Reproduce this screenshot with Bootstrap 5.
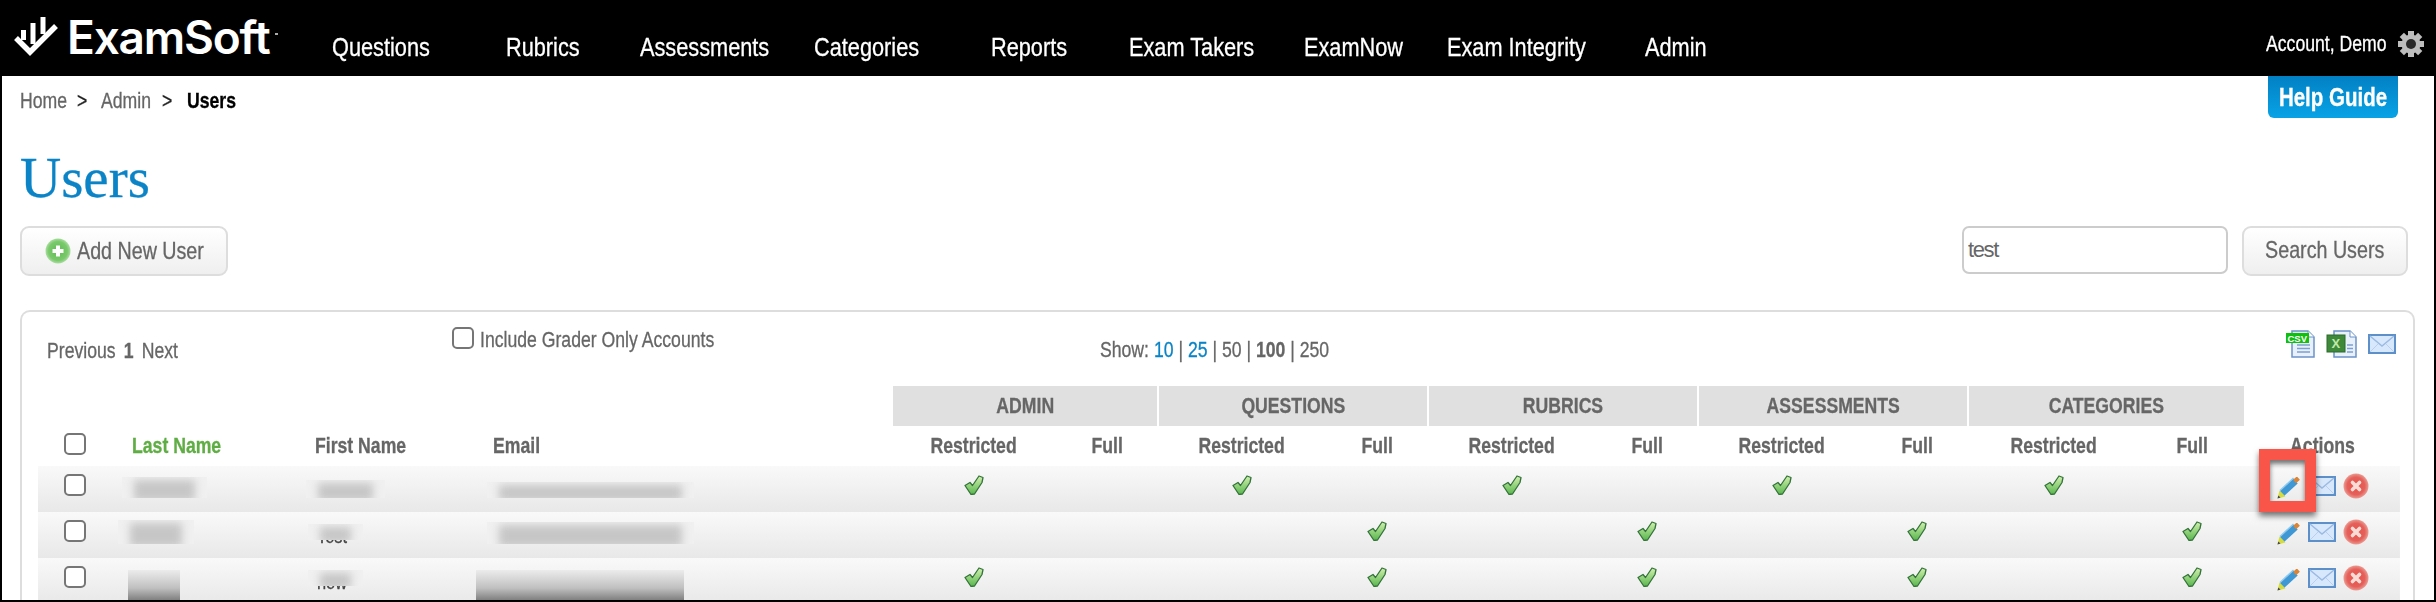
<!DOCTYPE html>
<html lang="en">
<head>
<meta charset="utf-8">
<title>Users</title>
<link href="https://cdn.jsdelivr.net/npm/bootstrap@5.3.0/dist/css/bootstrap.min.css" rel="stylesheet">
<style>
html,body{height:602px;overflow:hidden;background:#fff}
body{font-family:"Liberation Sans",Arial,sans-serif;color:#666;font-size:21.5px}
.frame{height:602px;overflow:hidden;border:solid #000;border-width:0 2px 2px;background:#fff}
.slim,.slimc{display:inline-block;white-space:nowrap;transform:scaleX(.82);-webkit-text-stroke:.3px currentColor}
.slim{transform-origin:left center}
.slimc{transform-origin:center center}
.topbar{height:76px;background:#000;color:#fff}
.logo{width:330px;padding:16px 0 0 12px}
.logo-word{font-family:Inter,"Liberation Sans",sans-serif;font-weight:600;font-size:46px;line-height:42px;letter-spacing:-1.2px;color:#fff;margin-left:7px;margin-top:0}
.logo-tm{width:3px;height:2px;background:#aaa;margin:17px 0 0 5px}
.menu{display:grid;grid-template-columns:174px 134px 174px 177px 138px 175px 143px 198px 100px;padding:29px 0 0;list-style:none;margin:0}
.menu a{color:#fff;text-decoration:none;font-size:26.5px;line-height:36px}
.account{padding:27px 8px 0 0;line-height:34px}
.acct-name{width:120px;margin-right:10px}
.gear{margin-top:3px}
.crumbrow{height:42px;padding-left:18px;padding-right:36px}
.crumbs{display:grid;grid-template-columns:57px 24px 61px 25px auto;line-height:26px;padding:12px 0 0;list-style:none;margin:0}
.crumbs a{color:#666;text-decoration:none}
.crumbs .sep{color:#222}
.crumbs b{color:#000}
.helpbtn{width:130px;height:42px;padding:0;border:0;border-radius:0 0 6px 6px;background:linear-gradient(#0280c4,#08a3e6);color:#fff;font-weight:700;font-size:25px;line-height:42px}
.pagetitle{font-family:"Liberation Serif",serif;color:#0a84c6;font-size:57px;line-height:64px;font-weight:400;margin:0;padding:28px 0 16px 18px;-webkit-text-stroke:.3px currentColor}
.toolrow{padding:0 26px 0 18px;height:50px}
.softbtn{height:50px;border:2px solid #ddd;border-radius:9px;background:linear-gradient(#fff,#efefef);color:#666;font-size:24px;line-height:44px;padding:0}
.addbtn{width:208px;padding-left:23px;gap:6px}
.searchbtn{width:166px;margin-left:14px}
.searchbox{width:266px;height:48px;border:2px solid #ccc;border-radius:7px;color:#666;font-size:22px;letter-spacing:-1.4px;padding:0 4px;font-family:inherit}
.panel{margin:34px 19px 0 18px;height:320px;border:2px solid #ddd;border-bottom:0;border-radius:10px 10px 0 0;padding:0 0 0 16px}
.paneltop{height:74px;display:grid;grid-template-columns:405px 648px 1fr auto;margin-left:9px;color:#666}
.pager{padding-top:26px;line-height:26px}
.pager b{margin:0 4px}
.graders{padding-top:14px;line-height:28px;display:flex}
.showbar{padding-top:25px;line-height:26px}
.showbar a{color:#0a84c6;text-decoration:none}
.exports{padding:18px 17px 0 0;gap:10px}
.tick{appearance:none;-webkit-appearance:none;display:block;width:22px;height:22px;border:2px solid #767676;border-radius:5px;background:#fff;margin:0}
.graders .tick{margin:1px 6px 0 0}
.usertable{width:2362px;table-layout:fixed;border-collapse:collapse;margin:0;--bs-table-bg:transparent;--bs-table-color:#666;color:#666}
.usertable th,.usertable td{padding:0;border:0;vertical-align:top;box-shadow:none}
.usertable th{font-size:21.5px;font-weight:700;text-align:center;line-height:40px;height:40px}
.usertable .grp{background:#e0e0e0;border-left:2px solid #fff;line-height:39px;padding-top:1px}
.usertable .lefth{text-align:left;padding-left:12px}
.sortname{color:#5fad44}
.usertable tbody tr{height:46px;background:linear-gradient(#f9f9f9,#e8e8e8)}
.usertable tbody td{height:46px;text-align:center;position:relative}
.usertable tbody td.namecell{text-align:left;padding:12px 0 0 14px;font-size:20px;line-height:24px;color:#444}
.rowtick{margin:8px 0 0 26px}
.headtick{margin:7px 0 0 26px}
.mark-ok{display:block;margin:9px auto 0}
.redact{display:block;background:#f0f0f0;overflow:hidden}
.smear{display:block;height:100%;background:#c6c6c6;filter:blur(4px);margin:3px 12px}
.r1a{width:85px;height:21px;margin:11px 0 0 2px}
.r1b{width:79px;height:18px;margin:14px 0 0 3px}
.r1c{width:207px;height:16px;margin:16px 0 0 6px}
.r2a{width:76px;height:24px;margin:8px 0 0 -2px}
.r2b{position:absolute;left:5px;top:12px;width:55px;height:16px}
.r2c{width:207px;height:22px;margin:10px 0 0 6px}
.r3a{width:52px;height:30px;margin:12px 0 0 8px;background:linear-gradient(#ececec,#c0c0c0 60%,#808080)}
.r3c{width:208px;height:30px;margin:12px 0 0 -5px;background:linear-gradient(#ececec,#c0c0c0 60%,#808080)}
.r3a .smear,.r3c .smear{background:transparent}
.acts{display:flex;align-items:flex-start;padding:7px 0 0 33px}
.acts .ic-mail{margin:3px 0 0 8px}
.acts .ic-del{margin:0 0 0 7px}
.callout{position:absolute;left:15px;top:-17px;width:57px;height:63px;border:11px solid #fa5549;box-shadow:0 4px 6px rgba(0,0,0,.55),inset 0 4px 5px rgba(0,0,0,.55);pointer-events:none}
.csvtag{font:700 9.5px/11px "Liberation Sans",sans-serif;fill:#fff}
.xlstag{font:700 13px/13px "Liberation Sans",sans-serif;fill:#bfe8a8}
</style>
</head>
<body>
<svg width="0" height="0" class="position-absolute">
<defs>
<linearGradient id="gOk" x1="0" y1="0" x2="0" y2="1"><stop offset="0" stop-color="#d2f0ae"/><stop offset="1" stop-color="#58b64c"/></linearGradient>
<radialGradient id="gDel"><stop offset="0" stop-color="#ea5148"/><stop offset=".7" stop-color="#e4605a"/><stop offset="1" stop-color="#eb9a90"/></radialGradient>
<radialGradient id="gAdd"><stop offset="0" stop-color="#5fbc52"/><stop offset=".75" stop-color="#79c96b"/><stop offset="1" stop-color="#a9dda0"/></radialGradient>
<symbol id="okmark" viewBox="0 0 20 20"><path d="M1 10.500 6 7.500 8.500 10.500 15 1 19 2.500 18 7.500 10.500 19 7 19.500Z" fill="url(#gOk)" stroke="#33733a" stroke-width="1.300" stroke-linejoin="round"/></symbol>
<symbol id="pencil" viewBox="0 0 23 22"><path d="M5 16.500 18.500 4" stroke="#3f97d4" stroke-width="6.500"/><path d="M3 13.500 16.500 1" stroke="#8ccaef" stroke-width="1.500"/><path d="M18.500 1.500 21.500 5" stroke="#d98436" stroke-width="5" transform="translate(-.5 -.5)"/><path d="M0.500 21.500 2.500 13.500 8.500 19.500Z" fill="#d6dc3a"/><path d="M.5 21.500 1.300 18.500 3.500 20.500Z" fill="#445"/></symbol>
<symbol id="mail" viewBox="0 0 28 20"><rect x="1" y="1" width="26" height="18" fill="#d8e8fc" stroke="#5d8fc9" stroke-width="2"/><path d="M2 2 14 12 26 2" fill="none" stroke="#9cbbe2" stroke-width="1.500"/><path d="M2 18 10 10M26 18 18 10" stroke="#b9d0ec" stroke-width="1"/></symbol>
<symbol id="del" viewBox="0 0 26 26"><circle cx="13" cy="13" r="12.500" fill="url(#gDel)"/><path d="M9.500 9.500 16.500 16.500M16.500 9.500 9.500 16.500" stroke="#fadcd7" stroke-width="3.600" stroke-linecap="round"/></symbol>
</defs>
</svg>
<div class="frame">
  <nav class="topbar d-flex">
    <div class="logo d-flex align-items-start">
      <svg width="46" height="40" viewBox="0 0 46 40" fill="none" class="flex-shrink-0"><g transform="translate(-14 -16)" stroke="#fff"><path d="M16 38 30 52 56 26" stroke-width="5.500"/><path d="M23.500 30V40" stroke-width="5"/><path d="M33 23V44" stroke-width="5"/><path d="M43 17V34" stroke-width="5"/></g></svg>
      <span class="logo-word">ExamSoft</span><span class="logo-tm"></span>
    </div>
    <ul class="menu flex-grow-1">
      <li><a href="#" class="slim">Questions</a></li><li><a href="#" class="slim">Rubrics</a></li><li><a href="#" class="slim">Assessments</a></li><li><a href="#" class="slim">Categories</a></li><li><a href="#" class="slim">Reports</a></li><li><a href="#" class="slim">Exam Takers</a></li><li><a href="#" class="slim">ExamNow</a></li><li><a href="#" class="slim">Exam Integrity</a></li><li><a href="#" class="slim">Admin</a></li>
    </ul>
    <div class="account d-flex align-items-start">
      <div class="acct-name"><span class="slim">Account, Demo</span></div>
      <svg class="gear" width="30" height="28" viewBox="0 0 30 28"><g fill="#bdbdbd"><circle cx="15" cy="14" r="9.500"/><g stroke="#bdbdbd" stroke-width="6"><path d="M15 1V27"/><path d="M2 14H28"/><path d="M5.800 4.800 24.200 23.200"/><path d="M24.200 4.800 5.800 23.200"/></g></g><circle cx="15" cy="14" r="5" fill="#2a2a2a"/></svg>
    </div>
  </nav>

  <div class="crumbrow d-flex justify-content-between align-items-start">
    <ol class="crumbs"><li><a href="#" class="slim">Home</a></li><li><span class="slim sep">&gt;</span></li><li><a href="#" class="slim">Admin</a></li><li><span class="slim sep">&gt;</span></li><li><b class="slim">Users</b></li></ol>
    <button type="button" class="btn helpbtn d-flex justify-content-center"><span class="slimc">Help Guide</span></button>
  </div>

  <h1 class="pagetitle">Users</h1>

  <div class="toolrow d-flex justify-content-between align-items-start">
    <button type="button" class="btn softbtn addbtn d-flex align-items-center">
      <svg width="26" height="26" viewBox="0 0 26 26" class="flex-shrink-0"><circle cx="13" cy="13" r="12.500" fill="url(#gAdd)"/><path d="M13 7.500V18.500M7.500 13H18.500" stroke="#fff" stroke-width="4"/></svg>
      <span class="slim">Add New User</span>
    </button>
    <form class="d-flex align-items-start">
      <input class="searchbox" type="text" value="test" aria-label="Search users">
      <button type="button" class="btn softbtn searchbtn d-flex justify-content-center"><span class="slimc">Search Users</span></button>
    </form>
  </div>

  <section class="panel">
    <div class="paneltop">
      <div class="pager"><span class="slim">Previous <b>1</b> Next</span></div>
      <label class="graders"><input type="checkbox" class="tick"><span class="slim">Include Grader Only Accounts</span></label>
      <div class="showbar"><span class="slim">Show: <a href="#">10</a> | <a href="#">25</a> | 50 | <b>100</b> | 250</span></div>
      <div class="exports d-flex align-items-start">
        <svg width="30" height="28" viewBox="0 0 30 28"><path d="M6 1H22L28 7V27H6Z" fill="#e8f0fb" stroke="#6b93c9" stroke-width="1.500"/><path d="M22 1V7H28" fill="#fff" stroke="#6b93c9"/><path d="M11 15H24M11 18.500H24M11 22H24" stroke="#7d9fd0" stroke-width="1.500"/><rect x="0" y="3" width="23" height="10" fill="#0fc00f"/><text x="1.500" y="11.500" class="csvtag">CSV</text></svg>
        <svg width="32" height="28" viewBox="0 0 32 28"><path d="M8 1H24L30 7V27H8Z" fill="#e8f0fb" stroke="#6b93c9" stroke-width="1.500"/><path d="M24 1V7H30" fill="#fff" stroke="#6b93c9"/><path d="M21 15H27M21 18.500H27M21 22H27" stroke="#7d9fd0" stroke-width="1.500"/><rect x="1" y="5" width="18" height="17" fill="#3f8a3a" stroke="#2a6a2a"/><text x="5.500" y="18" class="xlstag">X</text></svg>
        <svg width="28" height="20" class="mt-1"><use href="#mail"/></svg>
      </div>
    </div>
    <table class="table usertable">
      <colgroup><col style="width:82px"><col style="width:183px"><col style="width:178px"><col style="width:411px"><col style="width:164px"><col style="width:102px"><col style="width:168px"><col style="width:102px"><col style="width:168px"><col style="width:102px"><col style="width:168px"><col style="width:102px"><col style="width:172px"><col style="width:104px"><col></colgroup>
      <thead>
        <tr><th colspan="4"></th><th colspan="2" class="grp"><span class="slimc">ADMIN</span></th><th colspan="2" class="grp"><span class="slimc">QUESTIONS</span></th><th colspan="2" class="grp"><span class="slimc">RUBRICS</span></th><th colspan="2" class="grp"><span class="slimc">ASSESSMENTS</span></th><th colspan="2" class="grp"><span class="slimc">CATEGORIES</span></th><th></th></tr>
        <tr>
          <th><input type="checkbox" class="tick headtick" aria-label="Select all"></th>
          <th class="lefth"><span class="slim sortname">Last Name</span></th>
          <th class="lefth"><span class="slim">First Name</span></th>
          <th class="lefth"><span class="slim">Email</span></th>
          <th><span class="slimc">Restricted</span></th><th><span class="slimc">Full</span></th><th><span class="slimc">Restricted</span></th><th><span class="slimc">Full</span></th><th><span class="slimc">Restricted</span></th><th><span class="slimc">Full</span></th><th><span class="slimc">Restricted</span></th><th><span class="slimc">Full</span></th><th><span class="slimc">Restricted</span></th><th><span class="slimc">Full</span></th><th><span class="slimc">Actions</span></th>
        </tr>
      </thead>
      <tbody>
        <tr>
          <td><input type="checkbox" class="tick rowtick" aria-label="Select row"></td>
          <td><span class="redact r1a"><span class="smear"></span></span></td>
          <td><span class="redact r1b"><span class="smear"></span></span></td>
          <td><span class="redact r1c"><span class="smear"></span></span></td>
          <td><svg class="mark-ok" width="20" height="20"><use href="#okmark"/></svg></td><td></td>
          <td><svg class="mark-ok" width="20" height="20"><use href="#okmark"/></svg></td><td></td>
          <td><svg class="mark-ok" width="20" height="20"><use href="#okmark"/></svg></td><td></td>
          <td><svg class="mark-ok" width="20" height="20"><use href="#okmark"/></svg></td><td></td>
          <td><svg class="mark-ok" width="20" height="20"><use href="#okmark"/></svg></td><td></td>
          <td><div class="acts"><svg width="23" height="22" class="mt-1 ic-pen"><use href="#pencil"/></svg><svg class="ic-mail" width="28" height="20"><use href="#mail"/></svg><svg class="ic-del" width="26" height="26"><use href="#del"/></svg></div><div class="callout"></div></td>
        </tr>
        <tr>
          <td><input type="checkbox" class="tick rowtick" aria-label="Select row"></td>
          <td><span class="redact r2a"><span class="smear"></span></span></td>
          <td class="namecell"><span class="slim">Test</span><span class="redact r2b"><span class="smear"></span></span></td>
          <td><span class="redact r2c"><span class="smear"></span></span></td>
          <td></td><td></td>
          <td></td><td><svg class="mark-ok" width="20" height="20"><use href="#okmark"/></svg></td>
          <td></td><td><svg class="mark-ok" width="20" height="20"><use href="#okmark"/></svg></td>
          <td></td><td><svg class="mark-ok" width="20" height="20"><use href="#okmark"/></svg></td>
          <td></td><td><svg class="mark-ok" width="20" height="20"><use href="#okmark"/></svg></td>
          <td><div class="acts"><svg width="23" height="22" class="mt-1 ic-pen"><use href="#pencil"/></svg><svg class="ic-mail" width="28" height="20"><use href="#mail"/></svg><svg class="ic-del" width="26" height="26"><use href="#del"/></svg></div></td>
        </tr>
        <tr>
          <td><input type="checkbox" class="tick rowtick" aria-label="Select row"></td>
          <td><span class="redact r3a"><span class="smear"></span></span></td>
          <td class="namecell"><span class="slim">new</span><span class="redact r2b"><span class="smear"></span></span></td>
          <td><span class="redact r3c"><span class="smear"></span></span></td>
          <td><svg class="mark-ok" width="20" height="20"><use href="#okmark"/></svg></td><td></td>
          <td></td><td><svg class="mark-ok" width="20" height="20"><use href="#okmark"/></svg></td>
          <td></td><td><svg class="mark-ok" width="20" height="20"><use href="#okmark"/></svg></td>
          <td></td><td><svg class="mark-ok" width="20" height="20"><use href="#okmark"/></svg></td>
          <td></td><td><svg class="mark-ok" width="20" height="20"><use href="#okmark"/></svg></td>
          <td><div class="acts"><svg width="23" height="22" class="mt-1 ic-pen"><use href="#pencil"/></svg><svg class="ic-mail" width="28" height="20"><use href="#mail"/></svg><svg class="ic-del" width="26" height="26"><use href="#del"/></svg></div></td>
        </tr>
      </tbody>
    </table>
  </section>
</div>
</body>
</html>
